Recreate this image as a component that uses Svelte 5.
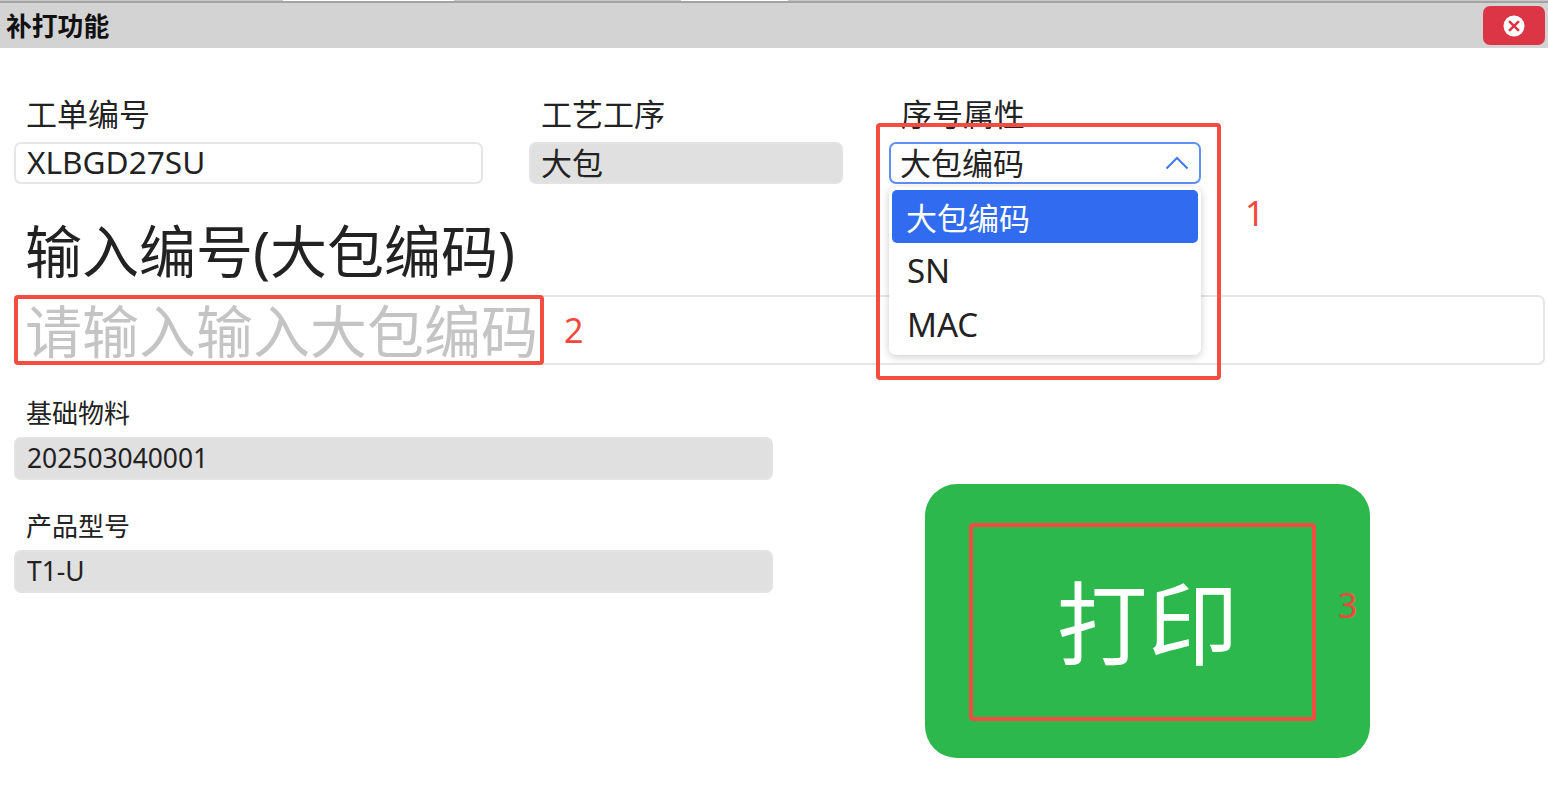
<script lang="ts">
  const options = ['大包编码', 'SN', 'MAC'];
  let selected = $state('大包编码');
  let open = $state(true);
  let code = $state('');
</script>

<div class="page">
  <div class="strip"></div>
  <header class="titlebar">
    <span class="title">补打功能</span>
    <button class="close" aria-label="关闭">
      <svg width="24" height="24" viewBox="0 0 24 24">
        <circle cx="12" cy="12" r="10.5" fill="#fff" />
        <path d="M7.8 7.8l8.4 8.4M16.2 7.8l-8.4 8.4" stroke="#dc3545" stroke-width="2.6" stroke-linecap="round" />
      </svg>
    </button>
  </header>

  <section class="top-row">
    <div class="field order">
      <label for="order">工单编号</label>
      <input id="order" class="box latin" value="XLBGD27SU" />
    </div>
    <div class="field process">
      <label for="process">工艺工序</label>
      <input id="process" class="box off" value="大包" readonly />
    </div>
    <div class="field attr">
      <span class="label">序号属性</span>
      <button class="box trigger" onclick={() => (open = !open)}>
        <span>{selected}</span>
        <svg class="chevron" width="24" height="14" viewBox="0 0 24 14">
          <path d="M1.5 12.5L12 2l10.5 10.5" fill="none" stroke="#3f78f0" stroke-width="2" />
        </svg>
      </button>
      {#if open}
        <ul class="menu">
          {#each options as opt}
            <li class:active={opt === selected} class:latin={opt !== '大包编码'}>
              <button onclick={() => (selected = opt)}>{opt}</button>
            </li>
          {/each}
        </ul>
      {/if}
      <div class="mark mark-1"></div>
      <span class="num num-1">1</span>
    </div>
  </section>

  <h1 class="heading">输入编号({selected})</h1>
  <div class="code-wrap">
    <input class="code" bind:value={code} placeholder="请输入输入{selected}" />
    <div class="mark mark-2"></div>
    <span class="num num-2">2</span>
  </div>

  <section class="bottom">
    <div class="info">
      <div class="field">
        <label class="small" for="material">基础物料</label>
        <input id="material" class="box off small-box" value="202503040001" readonly />
      </div>
      <div class="field">
        <label class="small" for="model">产品型号</label>
        <input id="model" class="box off small-box" value="T1-U" readonly />
      </div>
    </div>
    <div class="print-wrap">
      <button class="print">打印</button>
      <div class="mark mark-3"></div>
      <span class="num num-3">3</span>
    </div>
  </section>
</div>

<style>
  :global(body) {
    margin: 0;
    background: #fff;
  }

  .page {
    height: 787px;
    overflow: hidden;
    font-family: "Noto Sans", "Noto Sans CJK SC", sans-serif;
    color: #222;
  }

  button {
    font-family: inherit;
    color: inherit;
  }

  .strip {
    height: 1px;
    background: linear-gradient(90deg, #c8c8c8 283px, #fff 283px 454px, #c8c8c8 454px 681px, #fff 681px 788px, #c8c8c8 788px);
  }

  .titlebar {
    height: 45px;
    display: flex;
    align-items: center;
    justify-content: space-between;
    padding: 0 3px 0 6px;
    background: #d3d3d3;
    border-top: 2px solid #a3a3a3;
  }

  .title {
    padding-top: 3px;
    font-size: 25.8px;
    font-weight: 700;
    line-height: 1;
    color: #111;
  }

  .close {
    width: 62px;
    height: 39px;
    display: flex;
    align-items: center;
    justify-content: center;
    padding: 0;
    border: none;
    border-radius: 7px;
    background: #dc3545;
  }

  .top-row {
    display: flex;
    gap: 46px;
    padding: 50px 0 0 14px;
  }

  .field {
    position: relative;
    display: flex;
    flex-direction: column;
  }

  .order {
    width: 469px;
  }

  .process {
    width: 314px;
  }

  .attr {
    width: 312px;
  }

  label,
  .label {
    height: 44px;
    padding-left: 12px;
    font-size: 31px;
    line-height: 32px;
  }

  .box {
    box-sizing: border-box;
    width: 100%;
    height: 42px;
    padding: 0 10px 3px;
    border: 2px solid #e6e6e6;
    border-radius: 7px;
    background: #fff;
    font-family: inherit;
    font-size: 31px;
    line-height: 36px;
    color: #222;
    outline: none;
  }

  .box.latin {
    padding-left: 11px;
    font-size: 31.6px;
  }

  .off {
    background: #e0e0e0;
    border-color: #e3e3e3;
  }

  .trigger {
    display: flex;
    align-items: center;
    justify-content: space-between;
    padding: 0 10px 0 9px;
    border-color: #5f90f2;
    text-align: left;
  }

  .menu {
    position: absolute;
    z-index: 2;
    top: 89px;
    left: 0;
    right: 0;
    margin: 0;
    padding: 3px 3px 0;
    height: 165px;
    list-style: none;
    background: #fff;
    border-radius: 7px;
    box-shadow: 0 2px 8px rgba(0, 0, 0, 0.2);
  }

  .menu li {
    height: 54px;
  }

  .menu li button {
    width: 100%;
    height: 53px;
    padding: 0 14px;
    border: none;
    border-radius: 5px;
    background: none;
    font-size: 31px;
    text-align: left;
  }

  .menu li.latin button {
    padding-left: 15px;
    font-size: 33px;
  }

  .menu li.active button {
    background: #316bf0;
    color: #fff;
  }

  .heading {
    margin: 37px 0 14px;
    padding-left: 25px;
    font-size: 57px;
    font-weight: 400;
    line-height: 60px;
  }

  .code-wrap {
    position: relative;
    padding: 0 3px 0 14px;
  }

  .code {
    box-sizing: border-box;
    display: block;
    width: 100%;
    height: 70px;
    padding: 1px 9px 0;
    border: 2px solid #e6e6e6;
    border-radius: 7px;
    font-family: inherit;
    font-size: 57px;
    color: #222;
    outline: none;
  }

  .code::placeholder {
    color: #c4c4c4;
    opacity: 1;
  }

  .bottom {
    display: flex;
    padding: 32px 0 0 14px;
  }

  .info {
    width: 759px;
    display: flex;
    flex-direction: column;
    gap: 30px;
  }

  label.small {
    height: 39px;
    padding-top: 1px;
    font-size: 26px;
    line-height: 30px;
  }

  .small-box {
    height: 43px;
    padding: 0 11px 2px;
    font-size: 26.4px;
  }

  .print-wrap {
    position: relative;
    margin: 87px 0 0 152px;
    width: 445px;
    height: 274px;
  }

  .print {
    width: 100%;
    height: 100%;
    padding: 0 0 6px;
    border: none;
    border-radius: 32px;
    background: #2db84d;
    color: #fff;
    font-size: 91px;
  }

  .mark {
    position: absolute;
    z-index: 3;
    box-sizing: border-box;
    border: 4px solid #f44c41;
    border-radius: 4px;
    pointer-events: none;
  }

  .mark-1 {
    left: -13px;
    top: 25px;
    width: 345px;
    height: 257px;
  }

  .mark-2 {
    left: 14px;
    top: 0;
    width: 530px;
    height: 70px;
  }

  .mark-3 {
    left: 44px;
    top: 39px;
    width: 347px;
    height: 198px;
  }

  .num {
    position: absolute;
    z-index: 3;
    font-size: 34px;
    line-height: 40px;
    color: #f4483c;
  }

  .num-1 {
    left: 356px;
    top: 95px;
  }

  .num-2 {
    left: 564px;
    top: 15px;
  }

  .num-3 {
    left: 413px;
    top: 101px;
  }
</style>
